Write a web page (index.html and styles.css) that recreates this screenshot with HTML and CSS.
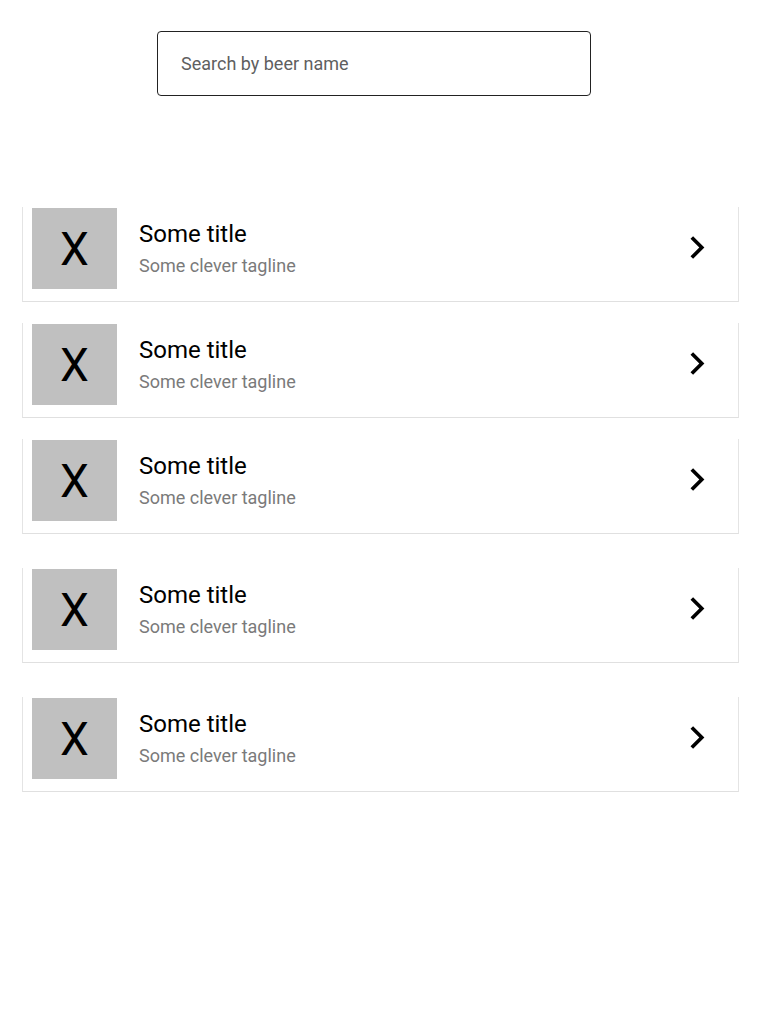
FILE: index.html
```html
<!DOCTYPE html>
<html lang="en">
<head>
<meta charset="utf-8">
<title>Beers</title>
<link rel="stylesheet" href="styles.css">
</head>
<body>
<div class="page">
  <div class="search-wrap">
    <input class="search" type="text" placeholder="Search by beer name">
  </div>
  <ul class="list">
    <li class="card">
      <div class="thumb">X</div>
      <div class="text"><div class="title">Some title</div><div class="tagline">Some clever tagline</div></div>
      <svg class="chev" width="17" height="23" viewBox="0 0 17 23"><path d="M0.5 2.7 L3.1 0.2 L14.4 11.5 L3.1 22.8 L0.5 20.3 L9.3 11.5 Z" fill="#000"/></svg>
    </li>
    <li class="card">
      <div class="thumb">X</div>
      <div class="text"><div class="title">Some title</div><div class="tagline">Some clever tagline</div></div>
      <svg class="chev" width="17" height="23" viewBox="0 0 17 23"><path d="M0.5 2.7 L3.1 0.2 L14.4 11.5 L3.1 22.8 L0.5 20.3 L9.3 11.5 Z" fill="#000"/></svg>
    </li>
    <li class="card">
      <div class="thumb">X</div>
      <div class="text"><div class="title">Some title</div><div class="tagline">Some clever tagline</div></div>
      <svg class="chev" width="17" height="23" viewBox="0 0 17 23"><path d="M0.5 2.7 L3.1 0.2 L14.4 11.5 L3.1 22.8 L0.5 20.3 L9.3 11.5 Z" fill="#000"/></svg>
    </li>
    <li class="card card-spaced">
      <div class="thumb">X</div>
      <div class="text"><div class="title">Some title</div><div class="tagline">Some clever tagline</div></div>
      <svg class="chev" width="17" height="23" viewBox="0 0 17 23"><path d="M0.5 2.7 L3.1 0.2 L14.4 11.5 L3.1 22.8 L0.5 20.3 L9.3 11.5 Z" fill="#000"/></svg>
    </li>
    <li class="card card-spaced">
      <div class="thumb">X</div>
      <div class="text"><div class="title">Some title</div><div class="tagline">Some clever tagline</div></div>
      <svg class="chev" width="17" height="23" viewBox="0 0 17 23"><path d="M0.5 2.7 L3.1 0.2 L14.4 11.5 L3.1 22.8 L0.5 20.3 L9.3 11.5 Z" fill="#000"/></svg>
    </li>
  </ul>
</div>
</body>
</html>
```

FILE: styles.css
```css
* { box-sizing: border-box; }
html, body {
  margin: 0;
  padding: 0;
  background: #fff;
  font-family: Roboto, "Noto Sans", sans-serif;
  color: #000;
}
.page {
  padding: 31px 0 0 22px;
  width: 761px;
}
.search-wrap {
  padding-left: 135px;
}
.search {
  display: block;
  width: 434px;
  height: 65px;
  border: 1px solid #222;
  border-radius: 4px;
  padding: 0 23px;
  font-family: Roboto, "Noto Sans", sans-serif;
  font-size: 18px;
  color: #000;
  outline: none;
  background: #fff;
}
.search::placeholder { color: #5f5f5f; }
.list {
  list-style: none;
  margin: 111px 0 0 0;
  padding: 0;
  display: flex;
  flex-direction: column;
  gap: 21px;
}
.card {
  display: flex;
  align-items: center;
  width: 717px;
  padding: 1px 31px 12px 9px;
  border-left: 1px solid #e4e4e4;
  border-right: 1px solid #e4e4e4;
  border-bottom: 1px solid #e0e0e0;
}
.card-spaced { margin-top: 13px; }
.thumb {
  width: 85px;
  height: 81px;
  background: #c0c0c0;
  display: flex;
  align-items: center;
  justify-content: center;
  font-size: 46px;
  color: #000;
  flex: none;
}
.text {
  flex: 1;
  margin: -1px 0 0 22px;
  display: flex;
  flex-direction: column;
  gap: 7px;
}
.title {
  font-size: 24px;
  line-height: 28px;
  color: #000;
}
.tagline {
  font-size: 18px;
  line-height: 21px;
  color: #7a7a7a;
}
.chev { flex: none; margin-top: -2px; }
```
